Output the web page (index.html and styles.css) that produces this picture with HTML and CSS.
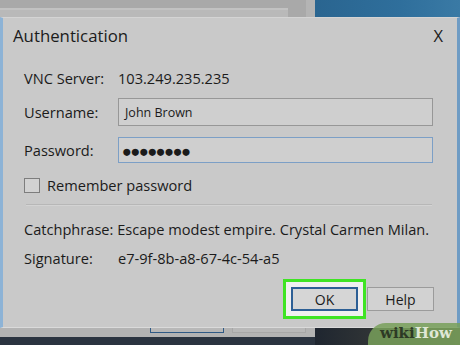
FILE: index.html
```html
<!DOCTYPE html>
<html lang="en">
<head>
  <meta charset="UTF-8" />
  <title>Authentication</title>
  <link rel="stylesheet" href="styles.css">
</head>
<body>
<div class="screen">
  <div class="top-strip">
    <div class="back-window"><div class="back-panel"></div></div>
    <div class="desktop"></div>
  </div>
  <div class="dialog">
    <div class="title-bar">
      <span class="title">Authentication</span>
      <span class="close">X</span>
    </div>
    <div class="form">
      <div class="row">
        <span class="label">VNC Server:</span>
        <span class="value">103.249.235.235</span>
      </div>
      <div class="row">
        <span class="label">Username:</span>
        <div class="field">John Brown</div>
      </div>
      <div class="row">
        <span class="label">Password:</span>
        <div class="field focused"><span class="dots">&#9679;&#9679;&#9679;&#9679;&#9679;&#9679;&#9679;&#9679;</span></div>
      </div>
      <label class="check-row">
        <span class="checkbox"></span>
        <span>Remember password</span>
      </label>
      <div class="separator"></div>
      <div class="row info">
        <span>Catchphrase: Escape modest empire. Crystal Carmen Milan.</span>
      </div>
      <div class="row info">
        <span class="label">Signature:</span>
        <span class="value">e7-9f-8b-a8-67-4c-54-a5</span>
      </div>
    </div>
    <div class="buttons">
      <div class="highlight"><button class="btn default">OK</button></div>
      <button class="btn">Help</button>
    </div>
  </div>
  <div class="bottom-strip">
    <div class="taskbar"><div class="task-btn"></div><div class="task-btn plain"></div></div>
    <div class="photo"></div>
    <div class="badge"><span class="wiki">wiki</span><span class="how">How</span></div>
  </div>
</div>
</body>
</html>
```

FILE: styles.css
```css
* {
  box-sizing: border-box;
}
body {
  margin: 0;
  font-family: 'Open Sans', 'Noto Sans', sans-serif;
  color: #1b1b1b;
}
.screen {
  width: 460px;
  height: 345px;
  overflow: hidden;
  position: relative;
  background: #2b3440;
}
.top-strip {
  display: flex;
  height: 17px;
}
.back-window {
  width: 315px;
  background: #a9a9a9;
  padding: 8px 18px 0 0;
  border-right: 9px solid #b4b4b4;
}
.back-panel {
  height: 100%;
  background: #b9b9b9;
  border-top: 2px solid #c2c2c2;
}
.desktop {
  flex: 1;
  background: linear-gradient(90deg, #2a6590, #2f6f9c 60%, #3a7aa5);
}
.dialog {
  height: 311px;
  background: #c9c9c9;
  border-left: 3px solid #8db3d6;
  border-right: 3px solid #6f9cc4;
  border-top: 1px solid #d4d4d4;
  border-bottom: 1px solid #dadada;
  display: flex;
  flex-direction: column;
}
.title-bar {
  display: flex;
  justify-content: space-between;
  align-items: center;
  padding: 0 14px 4px 10px;
  height: 38px;
}
.title {
  font-size: 16.8px;
}
.close {
  font-size: 16.5px;
}
.form {
  padding: 0 24px 0 21px;
}
.row {
  display: flex;
  align-items: center;
  font-size: 14.6px;
  height: 34px;
}
.label {
  width: 94px;
  flex: none;
}
.field {
  flex: 1;
  height: 28px;
  background: #cfcfcf;
  border: 1px solid #979797;
  font-size: 12.5px;
  padding: 0 6px;
  display: flex;
  align-items: center;
}
.field.focused {
  height: 26px;
  border-color: #7c9fc6;
  padding: 0 3px;
}
.dots {
  font-size: 16.5px;
  letter-spacing: -1.5px;
}
.row:nth-child(1) {
  height: 30px;
  margin-top: 7px;
}
.row:nth-child(2) {
  margin-top: 2px;
}
.row:nth-child(3) {
  margin-top: 4px;
}
.check-row {
  display: flex;
  align-items: center;
  gap: 7px;
  font-size: 14.6px;
  margin-top: 2px;
  height: 32px;
}
.checkbox {
  width: 16px;
  height: 15px;
  border: 1px solid #7d7d7d;
  background: #d2d2d2;
}
.separator {
  height: 2px;
  background: #b7b7b7;
  border-bottom: 1px solid #d3d3d3;
  margin: 3px 1px 8px 2px;
}
.info {
  height: 29px;
}
.buttons {
  display: flex;
  justify-content: flex-end;
  align-items: center;
  gap: 1px;
  padding: 7px 23px 0 0;
}
.highlight {
  padding: 5px;
  background: #f0f0f0;
  border: 3px solid #3fe424;
}
.btn {
  width: 67px;
  height: 24px;
  font-family: 'Open Sans', 'Noto Sans', sans-serif;
  font-size: 14px;
  color: #1b1b1b;
  background: #d2d2d2;
  border: 1px solid #9b9b9b;
  padding: 0;
}
.btn.default {
  border: 2px solid #2d5f95;
  background: #d6d6d6;
}
.bottom-strip {
  display: flex;
  height: 17px;
  position: relative;
}
.taskbar {
  width: 315px;
  height: 9px;
  background: #b3b3b3;
  display: flex;
  gap: 8px;
  padding-left: 150px;
}
.task-btn {
  width: 74px;
  height: 5px;
  border: 1px solid #2f5a86;
  border-top: none;
  background: #b8b8b8;
}
.task-btn.plain {
  border-color: #a7a7a7;
}
.photo {
  flex: 1;
  background: linear-gradient(90deg, #1f2630, #4a4a3e);
}
.badge {
  position: absolute;
  right: 0;
  bottom: 0;
  width: 92px;
  height: 22px;
  background: rgba(120, 160, 90, 0.85);
  border-top-left-radius: 18px;
  font-family: 'DejaVu Serif', serif;
  font-weight: bold;
  font-size: 15px;
  padding: 1px 0 0 12px;
}
.wiki {
  color: #2d3a25;
}
.how {
  color: #dfe8d6;
}
```
